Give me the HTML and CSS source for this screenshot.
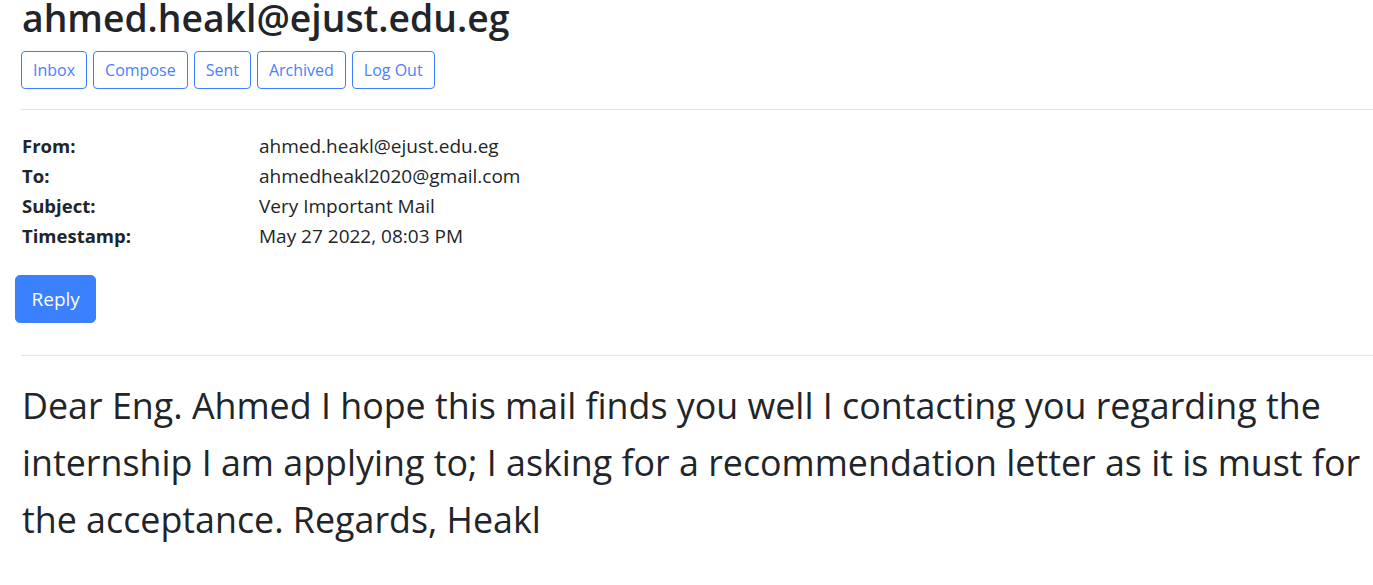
FILE: index.html
```html
<!DOCTYPE html>
<html lang="en">
<head>
<meta charset="utf-8">
<title>Mail</title>
<link rel="stylesheet" href="styles.css">
</head>
<body>
<div class="page">
  <h1 class="title">ahmed.heakl@ejust.edu.eg</h1>
  <nav class="nav">
    <button class="btn-outline">Inbox</button>
    <button class="btn-outline">Compose</button>
    <button class="btn-outline">Sent</button>
    <button class="btn-outline">Archived</button>
    <button class="btn-outline">Log Out</button>
  </nav>
  <hr class="rule rule-top">
  <div class="meta">
    <div class="label">From:</div><div class="value">ahmed.heakl@ejust.edu.eg</div>
    <div class="label">To:</div><div class="value">ahmedheakl2020@gmail.com</div>
    <div class="label">Subject:</div><div class="value">Very Important Mail</div>
    <div class="label">Timestamp:</div><div class="value">May 27 2022, 08:03 PM</div>
  </div>
  <div class="actions">
    <button class="btn-primary">Reply</button>
  </div>
  <hr class="rule rule-body">
  <p class="body-text">Dear Eng. Ahmed I hope this mail finds you well I contacting you regarding the internship I am applying to; I asking for a recommendation letter as it is must for the acceptance. Regards, Heakl</p>
</div>
</body>
</html>
```

FILE: styles.css
```css
* { box-sizing: border-box; }

html, body {
  margin: 0;
  padding: 0;
  background: #ffffff;
}

body {
  font-family: "Open Sans", "Noto Sans", sans-serif;
  color: #212529;
  overflow: hidden;
}

.page {
  padding: 0 0 0 21px;
}

.title {
  margin: 0 0 16px 1px;
  font-size: 37.3px;
  font-weight: 600;
  line-height: 35px;
  color: #212529;
}

.nav {
  display: flex;
  gap: 6px;
}

.btn-outline {
  font-family: inherit;
  font-size: 16px;
  line-height: 24px;
  padding: 6px 11px;
  border: 1px solid #3b80ff;
  border-radius: 4px;
  background: transparent;
  color: #4a80ff;
  cursor: pointer;
}

.rule {
  border: 0;
  border-top: 1px solid rgba(0, 0, 0, 0.1);
  margin: 0;
}

.rule-top {
  margin-top: 20px;
}

.meta {
  display: grid;
  grid-template-columns: 237px auto;
  margin: 21px 0 0 1px;
}

.label {
  font-size: 18.5px;
  font-weight: 700;
  line-height: 30px;
}

.value {
  font-size: 19px;
  line-height: 30px;
}

.actions {
  margin: 24px 0 0 -6px;
}

.btn-primary {
  font-family: inherit;
  font-size: 19px;
  line-height: 30px;
  padding: 8px 15.5px;
  border: 1px solid #3b80ff;
  border-radius: 5px;
  background: #3b80ff;
  color: #ffffff;
  cursor: pointer;
}

.rule-body {
  margin-top: 32px;
}

.body-text {
  margin: 21px 0 0 1px;
  font-size: 35.8px;
  line-height: 57px;
}
```
